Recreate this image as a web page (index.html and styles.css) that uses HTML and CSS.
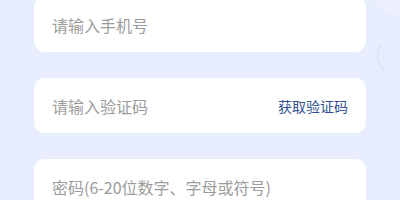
FILE: index.html
```html
<!DOCTYPE html>
<html lang="zh-CN">
<head>
<meta charset="utf-8">
<link rel="stylesheet" href="styles.css">
</head>
<body>
<div class="page">
  <svg class="deco" width="40" height="110" viewBox="0 0 40 110" aria-hidden="true">
    <path d="M10 0 H40 V16 C30 14 20 10 10 0 Z" fill="#ecf0fd"/>
    <path d="M20 46 C16 55 17 63 24 70" stroke="#dfe6f8" stroke-width="2.5" fill="none" stroke-linecap="round"/>
  </svg>
  <form class="form">
    <div class="field"><span class="placeholder">请输入手机号</span></div>
    <div class="field"><span class="placeholder">请输入验证码</span><span class="code-btn">获取验证码</span></div>
    <div class="field"><span class="placeholder">密码(6-20位数字、字母或符号)</span></div>
  </form>
</div>
</body>
</html>
```
FILE: styles.css
```css
html, body {
  margin: 0;
  padding: 0;
}
body {
  background: #e7edfc;
  font-family: "Noto Sans CJK SC", "Noto Sans", sans-serif;
  overflow: hidden;
}
.page {
  position: relative;
  width: 400px;
  height: 200px;
  overflow: hidden;
}
.deco {
  position: absolute;
  right: 0;
  top: 0;
}
.form {
  position: relative;
  display: flex;
  flex-direction: column;
  gap: 26px;
  margin: -3px 34px 0;
}
.field {
  height: 55px;
  background: #ffffff;
  border-radius: 10px;
  display: flex;
  align-items: center;
  justify-content: space-between;
  padding: 0 18px;
}
.placeholder {
  font-size: 16px;
  color: #9c9c9c;
  line-height: 1;
}
.code-btn {
  font-size: 14px;
  color: #2f4f8f;
  line-height: 1;
}
```
